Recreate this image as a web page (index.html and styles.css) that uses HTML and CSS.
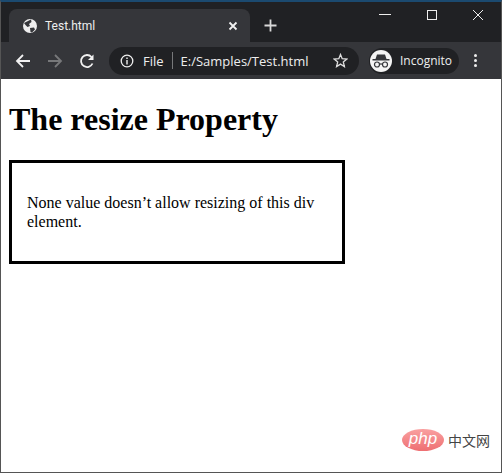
FILE: index.html
```html
<!DOCTYPE html>
<html lang="en">
<head>
    <meta charset="UTF-8">
    <title>Test.html</title>
    <link rel="stylesheet" href="styles.css">
</head>
<body>
    <div class="window">
        <div class="tabstrip">
            <div class="tab">
                <svg class="globe" width="16" height="16" viewBox="0 0 16 16">
                    <circle cx="8" cy="8" r="7" fill="#eee"/>
                    <path d="M2 5 L6 3 L9 1.500 L9.500 4 L7 6 L8 8 L5.500 9 L3.500 7 Z M8 10 L12 9.500 L13 11.500 L10 14.500 L8.500 14 Z" fill="#35363a"/>
                </svg>
                <span class="tab-title">Test.html</span>
                <svg class="tab-close" width="10" height="10" viewBox="0 0 10 10">
                    <path d="M1.500 1.500 L8.500 8.500 M8.500 1.500 L1.500 8.500" stroke="#f1f1f1" stroke-width="1.800"/>
                </svg>
            </div>
            <svg class="new-tab" width="13" height="13" viewBox="0 0 13 13">
                <path d="M6.500 0.500 V12.500 M0.500 6.500 H12.500" stroke="#d8d8d8" stroke-width="1.800"/>
            </svg>
            <div class="caption">
                <svg width="46" height="30" viewBox="0 2 46 30"><path d="M16 14.500 H28" stroke="#eee" stroke-width="1"/></svg>
                <svg width="46" height="30" viewBox="0 2 46 30"><rect x="18.500" y="10.500" width="9" height="9" fill="none" stroke="#eee" stroke-width="1"/></svg>
                <svg width="46" height="30" viewBox="0 2 46 30"><path d="M18 10 L28 20 M28 10 L18 20" stroke="#eee" stroke-width="1"/></svg>
            </div>
        </div>

        <div class="toolbar">
            <svg class="nav-icon" width="16" height="16" viewBox="0 0 16 16">
                <path d="M15 8 H2 M8 2 L2 8 L8 14" fill="none" stroke="#f1f1f1" stroke-width="1.800"/>
            </svg>
            <svg class="nav-icon" width="16" height="16" viewBox="0 0 16 16">
                <path d="M1 8 H14 M8 2 L14 8 L8 14" fill="none" stroke="#77787a" stroke-width="1.800"/>
            </svg>
            <svg class="nav-icon" width="16" height="16" viewBox="0 0 16 16">
                <path d="M13.500 10.500 A6 6 0 1 1 12.500 4" fill="none" stroke="#f1f1f1" stroke-width="1.800"/>
                <path d="M14.500 1.500 V7 H9 Z" fill="#f1f1f1"/>
            </svg>
            <div class="omnibox">
                <svg width="14" height="14" viewBox="0 0 14 14">
                    <circle cx="7" cy="7" r="5.800" fill="none" stroke="#eee" stroke-width="1.300"/>
                    <path d="M7 6 V10.500 M7 3.500 V5" stroke="#eee" stroke-width="1.400"/>
                </svg>
                <span class="scheme">File</span>
                <span class="divider"></span>
                <span class="url">E:/Samples/Test.html</span>
                <svg class="star" width="15" height="15" viewBox="0 0 15 15">
                    <path d="M7.500 1.500 L9.200 5.700 L13.800 6.100 L10.300 9 L11.400 13.500 L7.500 11.100 L3.600 13.500 L4.700 9 L1.200 6.100 L5.800 5.700 Z" fill="none" stroke="#ddd" stroke-width="1.300"/>
                </svg>
            </div>
            <div class="profile">
                <span class="avatar">
                    <svg width="18" height="14" viewBox="0 0 18 14">
                        <path d="M5 0.500 H13 L14.500 5 H17.500 V6.500 H0.500 V5 H3.500 Z" fill="#35363a"/>
                        <circle cx="5" cy="10.500" r="2.500" fill="none" stroke="#35363a" stroke-width="1.200"/>
                        <circle cx="13" cy="10.500" r="2.500" fill="none" stroke="#35363a" stroke-width="1.200"/>
                        <path d="M7.500 10 H10.500" stroke="#35363a" stroke-width="1.200"/>
                    </svg>
                </span>
                <span class="profile-name">Incognito</span>
            </div>
            <div class="menu"><i></i><i></i><i></i></div>
        </div>

        <div class="page">
            <h1>The resize Property</h1>
            <div class="resize-box">
                <p>None value doesn’t allow resizing of this div element.</p>
            </div>
            <div class="watermark">
                <span class="php-logo">php</span>
                <span class="php-cn">中文网</span>
            </div>
        </div>
    </div>
</body>
</html>
```

FILE: styles.css
```css
html, body {
    margin: 0;
    padding: 0;
    height: 100%;
}

body {
    background: #fff;
    overflow: hidden;
}

.window {
    box-sizing: border-box;
    height: 473px;
    display: flex;
    flex-direction: column;
    border-top: 2px solid #1b4a70;
    border-left: 1px solid #555;
    border-right: 1px solid #555;
    border-bottom: 1px solid #555;
    font-family: "Open Sans", "Liberation Sans", sans-serif;
}

.tabstrip {
    height: 40px;
    background: #202124;
    display: flex;
    align-items: flex-end;
    flex-shrink: 0;
}

.tab {
    width: 241px;
    height: 33px;
    margin-left: 8px;
    padding: 0 12px 0 13px;
    box-sizing: border-box;
    background: #35363a;
    border-radius: 8px 8px 0 0;
    display: flex;
    align-items: center;
    color: #eee;
    font-family: Roboto, "Liberation Sans", sans-serif;
    font-size: 12px;
}

.globe {
    flex-shrink: 0;
}

.tab-title {
    margin-left: 7px;
    flex: 1;
}

.new-tab {
    margin: 0 0 10px 14px;
}

.caption {
    margin-left: auto;
    align-self: flex-start;
    display: flex;
}

.caption svg {
    display: block;
}

.toolbar {
    height: 37px;
    background: #35363a;
    display: flex;
    align-items: center;
    padding-left: 14px;
    flex-shrink: 0;
}

.nav-icon {
    margin-right: 16px;
    flex-shrink: 0;
}

.omnibox {
    width: 250px;
    height: 28px;
    margin-left: -2px;
    padding: 0 11px;
    box-sizing: border-box;
    background: #202124;
    border-radius: 14px;
    display: flex;
    align-items: center;
    color: #eee;
    font-size: 13px;
}

.scheme {
    margin-left: 9px;
}

.divider {
    width: 1px;
    height: 17px;
    background: #77787a;
    margin: 0 8px;
}

.star {
    margin-left: auto;
}

.profile {
    width: 90px;
    height: 26px;
    margin-left: 10px;
    background: #202124;
    border-radius: 13px;
    display: flex;
    align-items: center;
    color: #eee;
    font-size: 12px;
}

.avatar {
    width: 22px;
    height: 22px;
    margin-left: 1px;
    background: #f4f4f4;
    border-radius: 50%;
    display: flex;
    align-items: center;
    justify-content: center;
}

.profile-name {
    margin-left: 8px;
}

.menu {
    margin-left: 15px;
    display: flex;
    flex-direction: column;
    gap: 2px;
}

.menu i {
    width: 3px;
    height: 3px;
    border-radius: 50%;
    background: #eee;
}

.page {
    flex: 1;
    position: relative;
    padding: 0 8px;
    font-family: "Liberation Serif", serif;
    color: #000;
}

h1 {
    margin: 22px 0;
    font-size: 32px;
    line-height: 37px;
}

.resize-box {
    width: 300px;
    padding: 15px;
    border: 3px solid #000;
    font-size: 16px;
    line-height: 19px;
}

.resize-box p {
    margin: 15px 0;
}

.watermark {
    position: absolute;
    right: 11px;
    bottom: 21px;
    display: flex;
    align-items: center;
    gap: 4px;
}

.php-logo {
    width: 42px;
    height: 22px;
    border-radius: 50%;
    background: linear-gradient(to bottom, #f9a0a0, #ee6f72);
    color: #fff;
    font-family: "Liberation Sans", sans-serif;
    font-style: italic;
    font-size: 17px;
    line-height: 20px;
    text-align: center;
}

.php-cn {
    font-family: "Noto Sans CJK SC", sans-serif;
    font-size: 14px;
    line-height: 20px;
    color: #444;
}
```
